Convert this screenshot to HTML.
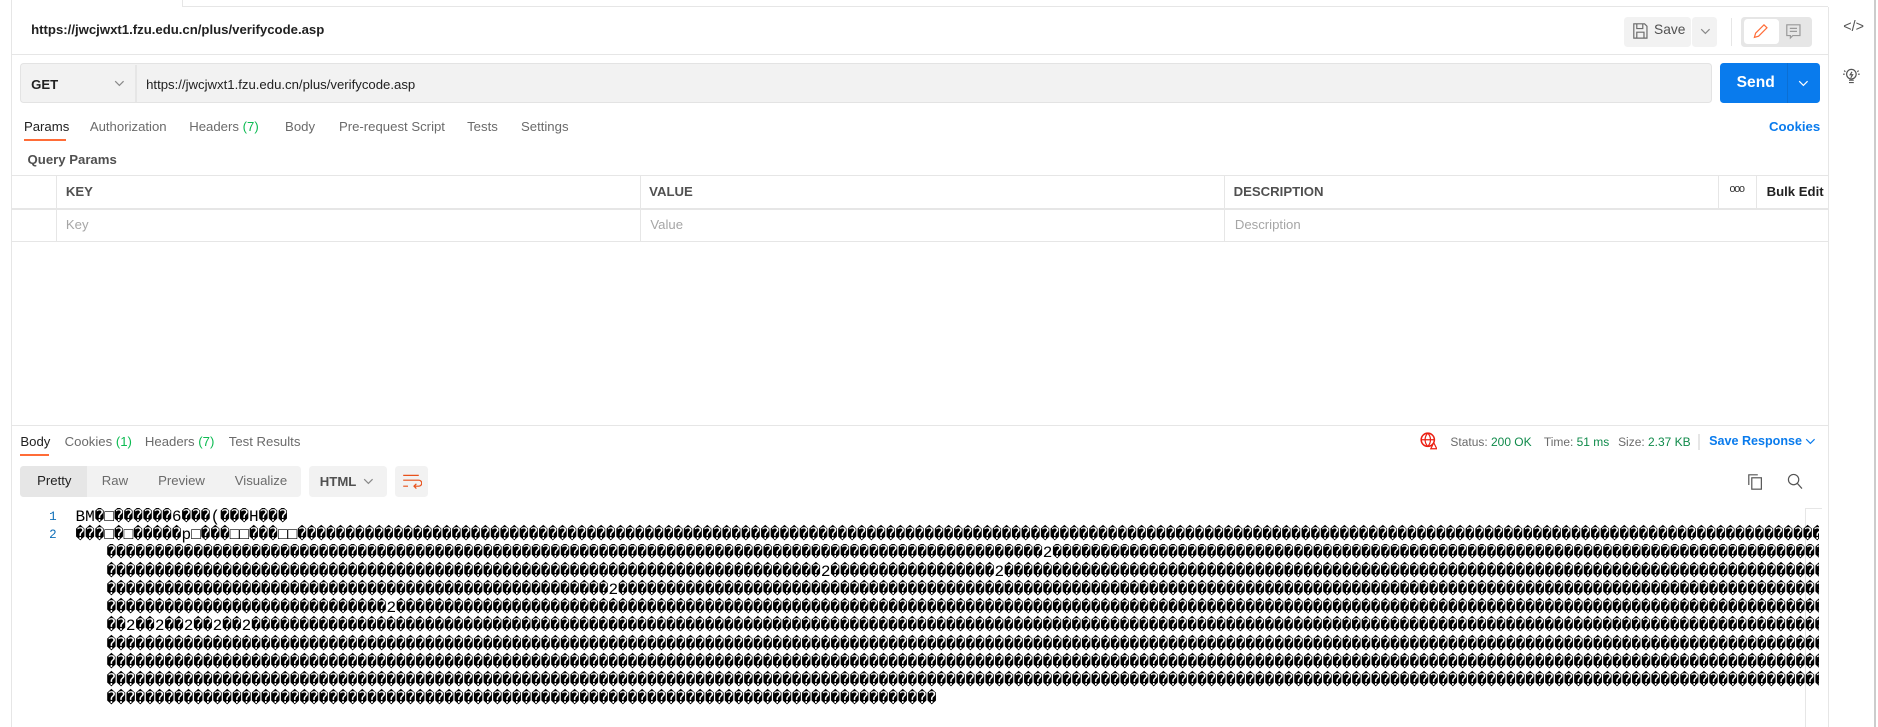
<!DOCTYPE html>
<html><head><meta charset="utf-8"><style>
*{margin:0;padding:0;box-sizing:border-box}
html,body{width:1878px;height:727px;overflow:hidden;background:#fff}
#w{zoom:1.19770;width:1568px;height:607px;position:relative;font-family:"Liberation Sans",sans-serif;font-size:11px;color:#6b6b6b}
.a{position:absolute;white-space:nowrap}
.ln{position:absolute;background:#e6e6e6}
.tab{position:absolute;top:99px}
.code{position:absolute;font-family:"Liberation Mono",monospace;font-size:13.4px;color:#000;white-space:pre;overflow:hidden;line-height:15.25px}
</style></head><body><div id="w">
<div class="ln" style="left:152px;top:0;width:1px;height:6px"></div>
<div class="ln" style="left:152px;top:5px;width:1374px;height:1px"></div>
<div class="ln" style="left:9px;top:0;width:1px;height:607px"></div>
<div class="ln" style="left:1526px;top:6px;width:1px;height:601px"></div>
<div class="ln" style="left:1565px;top:0;width:1px;height:607px;background:#ccc"></div>
<div class="a" style="left:26px;top:18px;font-weight:bold;color:#212121;font-size:11px">https://jwcjwxt1.fzu.edu.cn/plus/verifycode.asp</div>
<div class="a" style="left:1356px;top:14px;width:56px;height:25px;background:#f2f2f2;border-radius:3px"></div>
<svg class="a" style="left:1363px;top:18px" width="14" height="15" viewBox="0 0 14 15"><path d="M1.5 1.5h9l2 2v10h-11z M4 1.5v4h5v-4 M4 13.5v-5h6v5" fill="none" stroke="#6b6b6b" stroke-width="1"/></svg>
<div class="a" style="left:1381px;top:18px;color:#505050;font-size:11.5px">Save</div>
<div class="a" style="left:1413px;top:14px;width:21px;height:25px;background:#f2f2f2;border-radius:3px"></div>
<svg class="a" style="left:1419px;top:23px" width="9" height="6"><path d="M1 1l3.5 3.5L8 1" fill="none" stroke="#888"/></svg>
<div class="ln" style="left:1445px;top:15px;width:1px;height:23px"></div>
<div class="a" style="left:1454px;top:14px;width:59px;height:25px;background:#e6e6e6;border-radius:3px"></div>
<div class="a" style="left:1456px;top:16px;width:29px;height:21px;background:#fff;border-radius:3px"></div>
<svg class="a" style="left:1463px;top:19px" width="14" height="14"><path d="M2 12l1-3.5L10 1.5l2.5 2.5L5.5 11z" fill="none" stroke="#ff6c37" stroke-width="1"/></svg>
<svg class="a" style="left:1490px;top:19px" width="14" height="14"><path d="M1.5 1.5h11v9h-6l-2 2v-2h-3z M4 4.5h6 M4 7h6" fill="none" stroke="#999" stroke-width="1"/></svg>
<div class="a" style="left:1539px;top:16px;color:#555;font-size:12px">&lt;/&gt;</div>
<svg class="a" style="left:1539px;top:56px" width="14" height="16"><circle cx="7" cy="6" r="4" fill="none" stroke="#555"/><path d="M5 11h4M5 13h4M7.5 4l-1.5 2.5h2l-1.5 2.5M1 3l1 1M13 3l-1 1M0 6h1.5M12.5 6h1.5" stroke="#555" fill="none"/></svg>
<div class="ln" style="left:10px;top:45px;width:1516px;height:1px"></div>
<div class="a" style="left:17px;top:53px;width:1412px;height:33px;background:#f2f2f2;border:1px solid #e3e3e3;border-radius:3px"></div>
<div class="ln" style="left:113px;top:54px;width:1px;height:31px"></div>
<div class="a" style="left:26px;top:64px;font-weight:bold;color:#212121;font-size:11px">GET</div>
<svg class="a" style="left:95px;top:67px" width="9" height="6"><path d="M1 1l3.5 3.5L8 1" fill="none" stroke="#888"/></svg>
<div class="a" style="left:122px;top:64px;color:#212121;font-size:11px">https://jwcjwxt1.fzu.edu.cn/plus/verifycode.asp</div>
<div class="a" style="left:1436px;top:53px;width:84px;height:33px;background:#097bed;border-radius:3px"></div>
<div class="ln" style="left:1492px;top:53px;width:1px;height:33px;background:#0b6fd4"></div>
<div class="a" style="left:1450px;top:62px;color:#fff;font-weight:bold;font-size:13px">Send</div>
<svg class="a" style="left:1501px;top:67px" width="9" height="6"><path d="M1 1l3.5 3.5L8 1" fill="none" stroke="#fff"/></svg>
<div class="tab a" style="left:20px;color:#212121">Params</div>
<div class="a" style="left:20px;top:116px;width:35px;height:2px;background:#ff6c37"></div>
<div class="tab a" style="left:75px">Authorization</div>
<div class="tab a" style="left:158px">Headers <span style="color:#0cbb52">(7)</span></div>
<div class="tab a" style="left:238px">Body</div>
<div class="tab a" style="left:283px">Pre-request Script</div>
<div class="tab a" style="left:390px">Tests</div>
<div class="tab a" style="left:435px">Settings</div>
<div class="tab a" style="left:1477px;color:#097bed;font-weight:bold">Cookies</div>
<div class="a" style="left:23px;top:127px;font-weight:bold;color:#505050">Query Params</div>
<div class="ln" style="left:10px;top:146px;width:1516px;height:1px"></div>
<div class="ln" style="left:10px;top:174px;width:1516px;height:1px"></div>
<div class="ln" style="left:10px;top:201px;width:1516px;height:1px"></div>
<div class="ln" style="left:47px;top:147px;width:1px;height:54px"></div>
<div class="ln" style="left:534px;top:147px;width:1px;height:54px"></div>
<div class="ln" style="left:1022px;top:147px;width:1px;height:54px"></div>
<div class="ln" style="left:1434px;top:147px;width:1px;height:27px"></div>
<div class="ln" style="left:1466px;top:147px;width:1px;height:27px"></div>
<div class="a" style="left:55px;top:154px;font-weight:bold;color:#505050">KEY</div>
<div class="a" style="left:542px;top:154px;font-weight:bold;color:#505050">VALUE</div>
<div class="a" style="left:1030px;top:154px;font-weight:bold;color:#505050">DESCRIPTION</div>
<div class="a" style="left:1444px;top:153px;color:#333;font-size:9px;letter-spacing:-1px">ooo</div>
<div class="a" style="left:1475px;top:154px;font-weight:bold;color:#212121">Bulk Edit</div>
<div class="a" style="left:55px;top:181px;color:#a6a6a6">Key</div>
<div class="a" style="left:543px;top:181px;color:#a6a6a6">Value</div>
<div class="a" style="left:1031px;top:181px;color:#a6a6a6">Description</div>
<div class="ln" style="left:10px;top:355px;width:1516px;height:1px"></div>
<div class="a" style="left:17px;top:362px;color:#212121">Body</div>
<div class="a" style="left:17px;top:379px;width:24px;height:2px;background:#ff6c37"></div>
<div class="a" style="left:54px;top:362px">Cookies <span style="color:#0cbb52">(1)</span></div>
<div class="a" style="left:121px;top:362px">Headers <span style="color:#0cbb52">(7)</span></div>
<div class="a" style="left:191px;top:362px">Test Results</div>
<svg class="a" style="left:1186px;top:361px" width="14" height="15"><circle cx="6.5" cy="6.5" r="5.5" fill="none" stroke="#eb2013" stroke-width="1.3"/><path d="M1 6.5h11M6.5 1c-3 3-3 8 0 11M6.5 1c3 3 3 8 0 11" fill="none" stroke="#eb2013"/><path d="M9 14l2.5-5 2.5 5z" fill="#fff" stroke="#eb2013"/></svg>
<div class="a" style="left:1211px;top:363px;font-size:10px">Status: <span style="color:#0f8a4a">200 OK</span></div>
<div class="a" style="left:1289px;top:363px;font-size:10px">Time: <span style="color:#0f8a4a">51 ms</span></div>
<div class="a" style="left:1351px;top:363px;font-size:10px">Size: <span style="color:#0f8a4a">2.37 KB</span></div>
<div class="ln" style="left:1418px;top:362px;width:1px;height:14px"></div>
<div class="a" style="left:1427px;top:362px;color:#097bed;font-weight:bold;font-size:10.5px">Save Response</div>
<svg class="a" style="left:1507px;top:366px" width="9" height="6"><path d="M1 1l3.5 3.5L8 1" fill="none" stroke="#097bed"/></svg>
<div class="a" style="left:17px;top:389px;width:234px;height:26px;background:#f2f2f2;border-radius:3px"></div>
<div class="a" style="left:17px;top:389px;width:56px;height:26px;background:#e6e6e6;border-radius:3px 0 0 3px"></div>
<div class="a" style="left:31px;top:395px;color:#212121">Pretty</div>
<div class="a" style="left:85px;top:395px">Raw</div>
<div class="a" style="left:132px;top:395px">Preview</div>
<div class="a" style="left:196px;top:395px">Visualize</div>
<div class="a" style="left:258px;top:389px;width:65px;height:26px;background:#f2f2f2;border-radius:3px"></div>
<div class="a" style="left:267px;top:396px;font-weight:bold;color:#505050">HTML</div>
<svg class="a" style="left:303px;top:399px" width="9" height="6"><path d="M1 1l3.5 3.5L8 1" fill="none" stroke="#888"/></svg>
<div class="a" style="left:330px;top:389px;width:27px;height:26px;background:#f2f2f2;border-radius:3px"></div>
<svg class="a" style="left:336px;top:395px" width="16" height="14"><path d="M1 2h13M1 6h13a2.5 2.5 0 0 1 0 5h-4M12 9l-2 2 2 2M1 11h4" fill="none" stroke="#e8511b"/></svg>
<svg class="a" style="left:1459px;top:395px" width="14" height="15"><path d="M1.5 10V1.5H9" fill="none" stroke="#555"/><rect x="4" y="4" width="8" height="9.5" fill="none" stroke="#555"/></svg>
<svg class="a" style="left:1492px;top:395px" width="14" height="15"><circle cx="5.5" cy="5.5" r="4.3" fill="none" stroke="#555"/><path d="M8.5 8.5l4 4.5" stroke="#555"/></svg>
<div class="ln" style="left:1507px;top:424px;width:1px;height:183px"></div>
<div class="ln" style="left:1507px;top:424px;width:14px;height:1px"></div>
<div class="a" style="left:41px;top:424px;color:#0f6fb8;font-family:'Liberation Mono',monospace;font-size:10.5px;line-height:15.25px">1<br>2</div>
<div class="code" style="left:63px;top:424px;width:1456px">BM�□������6���(���H���
���□�□�����p□���□□���□□����������������������������������������������������������������������������������������������������������������������������������������������������������������������������������</div>
<div class="code" style="left:89px;top:454.5px;width:1430px">�������������������������������������������������������������������������������������������������2�����������������������������������������������������������������������������������������������������
��������������������������������������������������������������������������2�����������������2����������������������������������������������������������������������������������������������������������������
����������������������������������������������������2���������������������������������������������������������������������������������������������������������������������������������������������������
�����������������������������2�������������������������������������������������������������������������������������������������������������������������������������������������������������������������
��2��2��2��2��2��������������������������������������������������������������������������������������������������������������������������������������������������������������������������������������������
�������������������������������������������������������������������������������������������������������������������������������������������������������������������������������������������������������������
�������������������������������������������������������������������������������������������������������������������������������������������������������������������������������������������������������������
�������������������������������������������������������������������������������������������������������������������������������������������������������������������������������������������������������������
��������������������������������������������������������������������������������������</div>
</div></body></html>
